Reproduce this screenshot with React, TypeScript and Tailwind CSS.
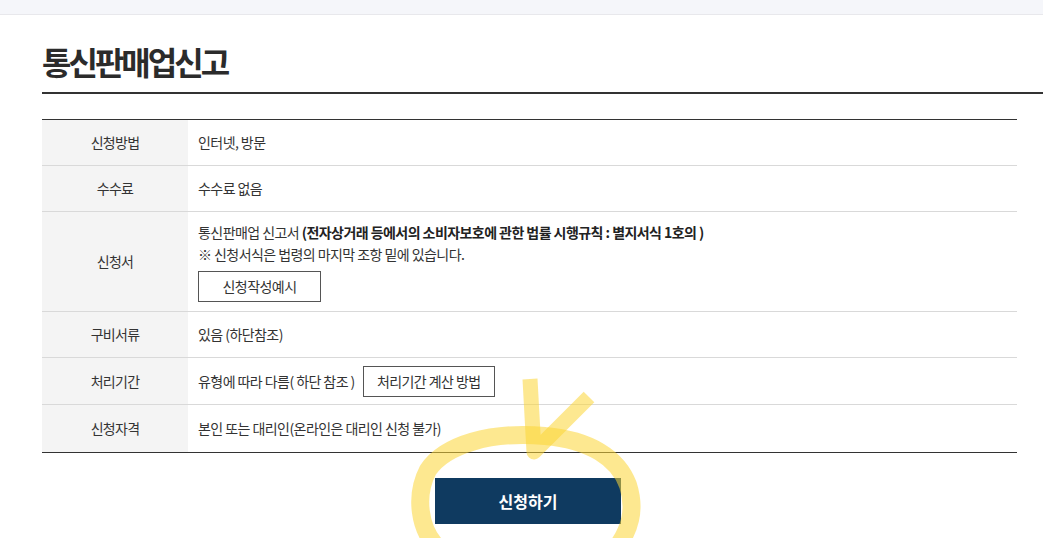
const rows = [
  { label: '신청방법', h: 'h-[46px]' },
  { label: '수수료', h: 'h-[46px]' },
  { label: '신청서', h: 'h-[100px]' },
  { label: '구비서류', h: 'h-[46px]' },
  { label: '처리기간', h: 'h-[47px]' },
  { label: '신청자격', h: 'h-[47px]' },
]

function RowValue({ label }: { label: string }) {
  switch (label) {
    case '신청방법':
      return <span>인터넷, 방문</span>
    case '수수료':
      return <span>수수료 없음</span>
    case '신청서':
      return (
        <div className="flex flex-col items-start">
          <p className="leading-[22px]">
            통신판매업 신고서 <b className="font-bold text-[#222]">(전자상거래 등에서의 소비자보호에 관한 법률 시행규칙 : 별지서식 1호의 )</b>
          </p>
          <p className="leading-[22px]">※ 신청서식은 법령의 마지막 조항 밑에 있습니다.</p>
          <button className="mt-[6px] h-[31px] w-[123px] border border-[#555] bg-white text-[14px] text-[#333]">
            신청작성예시
          </button>
        </div>
      )
    case '구비서류':
      return <span>있음 (하단참조)</span>
    case '처리기간':
      return (
        <div className="flex items-center gap-[8px]">
          <span>유형에 따라 다름( 하단 참조 )</span>
          <button className="h-[31px] w-[132px] border border-[#555] bg-white text-[14px] text-[#333]">
            처리기간 계산 방법
          </button>
        </div>
      )
    default:
      return <span>본인 또는 대리인(온라인은 대리인 신청 불가)</span>
  }
}

export default function App() {
  return (
    <div className="relative h-[538px] w-[1043px] overflow-hidden bg-white font-['Noto_Sans_CJK_KR',sans-serif] text-[#333]">
      <div className="h-[15px] border-b border-[#e8e8ec] bg-[#f5f6fa]" />

      <div className="pl-[42px]">
        <h1 className="mt-[26px] h-[40px] text-[32px] font-bold leading-[40px] tracking-[-3px] text-[#2b2b2b]">
          통신판매업신고
        </h1>
        <div className="mt-[11px] h-[2px] bg-[#333]" />

        <div className="mt-[25px] w-[975px] border-t border-b border-[#333]">
          {rows.map((row, i) => (
            <div
              key={row.label}
              className={`flex ${row.h} ${i < rows.length - 1 ? 'border-b border-[#d9d9d9]' : ''}`}
            >
              <div className="flex w-[146px] shrink-0 items-center justify-center bg-[#f4f4f4] text-[14px] tracking-[-0.05em]">
                {row.label}
              </div>
              <div className="flex flex-1 items-center pl-[10px] text-[14px] tracking-[-0.04em]">
                <RowValue label={row.label} />
              </div>
            </div>
          ))}
        </div>

        <div className="flex w-[975px] justify-center pt-[25px]">
          <button className="ml-[-3px] h-[46px] w-[186px] bg-[#0f3a60] text-[16px] font-bold text-white">
            신청하기
          </button>
        </div>
      </div>

      <svg className="pointer-events-none absolute inset-0" width="1043" height="538" viewBox="0 0 1043 538">
        <path
          d="M545 436 C 490 431, 445 445, 428 470 C 415 495, 418 530, 440 550 M545 436 C 590 440, 618 458, 628 485 C 636 510, 630 530, 615 550"
          fill="none"
          stroke="#fcd535"
          strokeOpacity="0.55"
          strokeWidth="18"
          strokeLinecap="round"
        />
        <path
          d="M530 379 L534 452 L589 397"
          fill="none"
          stroke="#fcd535"
          strokeOpacity="0.55"
          strokeWidth="15"
          strokeLinejoin="round"
        />
      </svg>
    </div>
  )
}
